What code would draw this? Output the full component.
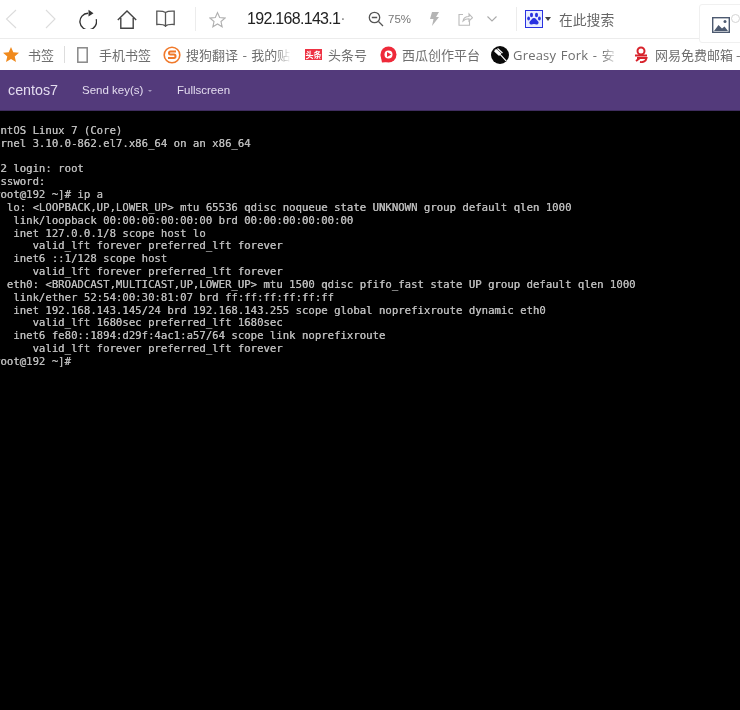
<script>
  const lines = [
    "CentOS Linux 7 (Core)",
    "Kernel 3.10.0-862.el7.x86_64 on an x86_64",
    "",
    "192 login: root",
    "Password:",
    "[root@192 ~]# ip a",
    "1: lo: <LOOPBACK,UP,LOWER_UP> mtu 65536 qdisc noqueue state UNKNOWN group default qlen 1000",
    "    link/loopback 00:00:00:00:00:00 brd 00:00:00:00:00:00",
    "    inet 127.0.0.1/8 scope host lo",
    "       valid_lft forever preferred_lft forever",
    "    inet6 ::1/128 scope host",
    "       valid_lft forever preferred_lft forever",
    "2: eth0: <BROADCAST,MULTICAST,UP,LOWER_UP> mtu 1500 qdisc pfifo_fast state UP group default qlen 1000",
    "    link/ether 52:54:00:30:81:07 brd ff:ff:ff:ff:ff:ff",
    "    inet 192.168.143.145/24 brd 192.168.143.255 scope global noprefixroute dynamic eth0",
    "       valid_lft 1680sec preferred_lft 1680sec",
    "    inet6 fe80::1894:d29f:4ac1:a57/64 scope link noprefixroute",
    "       valid_lft forever preferred_lft forever",
    "[root@192 ~]#"
  ];
</script>

<div class="page">
  <div class="toolbar">
    <svg class="ic back" width="12" height="20" viewBox="0 0 12 20"><path d="M11 1 1.500 10 11 19" fill="none" stroke="#dcdcdc" stroke-width="1.100"/></svg>
    <svg class="ic fwd" width="11" height="20" viewBox="0 0 11 20"><path d="M1 1 10 10 1 19" fill="none" stroke="#dcdcdc" stroke-width="1.100"/></svg>
    <svg class="ic reload" width="18" height="20" viewBox="0 0 18 20"><path d="M17.200 9.300A8.300 8.300 0 1 1 9 3.300" fill="none" stroke="#333" stroke-width="1.400" transform="translate(0 1)"/><path d="M9.500 .8 14.500 4.300 9.500 7.500Z" fill="#333"/></svg>
    <svg class="ic home" width="20" height="19" viewBox="0 0 20 19"><path d="M.8 10 10 1 19.200 10M3.800 8v10.200h12.400V8" fill="none" stroke="#444" stroke-width="1.400"/></svg>
    <svg class="ic book" width="19" height="18" viewBox="0 0 19 18"><path d="M9.500 2.500C8 1.500 4 1 .8 1.200v13.300c3.200-.2 7.200.2 8.700 1.500 1.500-1.300 5.500-1.700 8.700-1.500V1.200C15 1 11 1.500 9.500 2.500Zm0 0V17" fill="none" stroke="#555" stroke-width="1.300"/></svg>
    <span class="vsep first"></span>
    <svg class="ic star" width="17" height="17" viewBox="0 0 18 17"><path d="M9 1.200 11.300 6.400 16.900 7 12.700 10.700 13.900 16.200 9 13.300 4.100 16.200 5.300 10.700 1.100 7 6.700 6.400Z" fill="none" stroke="#b0b0b0" stroke-width="1.200"/></svg>
    <span class="url">192.168.143.1<span class="dim">·</span></span>
    <svg class="ic mag" width="16" height="16" viewBox="0 0 16 16"><circle cx="6.500" cy="6.500" r="5.200" fill="none" stroke="#555" stroke-width="1.300"/><path d="M3.800 6.500h5.400M10.500 10.500 15 15" fill="none" stroke="#555" stroke-width="1.300"/></svg>
    <span class="zoomv">75%</span>
    <svg class="ic bolt" width="9" height="14" viewBox="0 0 9 14"><path d="M2 0h7L6 5h3L2 14l1.500-7H0Z" fill="#b5b5b5"/></svg>
    <svg class="ic share" width="15" height="14" viewBox="0 0 15 14"><path d="M5 2.500H1v10.800h10.500V9M5 9c.5-3 3-4.500 6-4.500V2l3.500 3.700L11 9V6.800C8.500 6.800 6.500 7.500 5 9Z" fill="none" stroke="#bbb" stroke-width="1.100"/></svg>
    <svg class="ic chev" width="10" height="6" viewBox="0 0 10 6"><path d="M.5.500 5 5 9.500.5" fill="none" stroke="#aaa" stroke-width="1.100"/></svg>
    <span class="vsep second"></span>
    <svg class="ic paw" width="18" height="18" viewBox="0 0 18 18"><rect x=".5" y=".5" width="17" height="17" fill="#e8edff" stroke="#2932e1"/><ellipse cx="6.500" cy="5" rx="1.500" ry="2.200" fill="#2932e1"/><ellipse cx="11.500" cy="5" rx="1.500" ry="2.200" fill="#2932e1"/><ellipse cx="3.600" cy="8.500" rx="1.400" ry="1.900" fill="#2932e1"/><ellipse cx="14.400" cy="8.500" rx="1.400" ry="1.900" fill="#2932e1"/><path d="M9 8c2 0 2.500 2 4 3.200 1.300 1.200.5 3.500-1.500 3.300-1-.1-1.500-.4-2.500-.4s-1.500.3-2.500.4c-2 .2-2.800-2.100-1.500-3.300C6.500 10 7 8 9 8Z" fill="#2932e1"/></svg>
    <span class="caret"></span>
    <span class="search">在此搜索</span>
  </div>

  <div class="card">
    <svg width="18" height="16" viewBox="0 0 18 16"><rect x=".7" y=".7" width="16.600" height="14.600" fill="#fff" stroke="#4d5a70" stroke-width="1.400"/><path d="M2 14l4.500-6 3.500 3.500 2.500-2L16 14Z" fill="#4d5a70"/><circle cx="13" cy="4.500" r="1.500" fill="#4d5a70"/></svg>
    <span class="lens"></span>
  </div>

  <div class="bookmarks">
    <svg class="b bstar" width="16" height="15" viewBox="0 0 16 15"><path d="M8 0 10.300 5.200 16 5.800 11.700 9.500 13 15 8 12.100 3 15 4.300 9.500 0 5.800 5.700 5.200Z" fill="#f08a1d"/></svg>
    <span class="lbl s1">书签</span>
    <span class="hsep"></span>
    <svg class="b phone" width="11" height="16" viewBox="0 0 11 16"><rect x=".8" y=".8" width="9.400" height="14.400" fill="none" stroke="#888" stroke-width="1.500"/></svg>
    <span class="lbl s2">手机书签</span>
    <svg class="b sogou" width="18" height="18" viewBox="0 0 18 18"><circle cx="9" cy="9" r="7.800" fill="#fff" stroke="#f0792a" stroke-width="1.600"/><path d="M13 5.500H7.500c-2 0-2 3 0 3h3.500c2 0 2 3.500 0 3.500H5" fill="none" stroke="#f0792a" stroke-width="2"/></svg>
    <span class="lbl s3 fade">搜狗翻译 - 我的贴</span>
    <span class="b tt">头条</span>
    <span class="lbl s4">头条号</span>
    <svg class="b xg" width="18" height="18" viewBox="0 0 18 18"><circle cx="9.500" cy="8.500" r="8" fill="#ee2a3a"/><path d="M1.500 9 3 16.500 9 16Z" fill="#ee2a3a"/><circle cx="9.500" cy="8.500" r="4" fill="#fff"/><path d="M8 6 12.300 8.500 8 11Z" fill="#ee2a3a"/></svg>
    <span class="lbl s5">西瓜创作平台</span>
    <svg class="b gf" width="18" height="18" viewBox="0 0 18 18"><circle cx="9" cy="9" r="9" fill="#0a0a0a"/><path d="M5 3.500 10 8M3.500 5l5 4.500M6.500 2.500l5 4.500M3.800 3.800l6.500 5.800 5 5.500" stroke="#fff" stroke-width="1.200" fill="none"/></svg>
    <span class="lbl s6 latin fade">Greasy Fork - 安</span>
    <svg class="b wy" width="14" height="17" viewBox="0 0 14 17"><circle cx="7" cy="5" r="3.500" fill="none" stroke="#d8232c" stroke-width="2"/><path d="M1 9.500h12M3 12h9.500C12 15 9 16.500 6 16M2 15l4-3" fill="none" stroke="#d8232c" stroke-width="2"/></svg>
    <span class="lbl s7">网易免费邮箱 -</span>
  </div>

  <div class="nav">
    <span class="brand">centos7</span>
    <span class="item send">Send key(s)<span class="mini"></span></span>
    <span class="item full">Fullscreen</span>
  </div>

  <div class="term">
    <pre>{lines.join("\n")}</pre>
  </div>
</div>

<style>
  :global(body) {
    margin: 0;
    background: #000;
  }
  .page {
    position: relative;
    width: 740px;
    height: 710px;
    overflow: hidden;
    font-family: "Noto Sans CJK SC", "Noto Sans", sans-serif;
  }
  .toolbar {
    height: 38px;
    background: #fff;
    border-bottom: 1px solid #ececec;
    display: flex;
    align-items: center;
    filter: blur(0.3px);
  }
  .ic { flex: none; }
  .back { margin-left: 5px; }
  .fwd { margin-left: 28px; }
  .reload { margin-left: 23px; }
  .home { margin-left: 20px; }
  .book { margin-left: 19px; }
  .vsep { width: 1px; height: 24px; background: #ececec; flex: none; }
  .vsep.first { margin-left: 20px; }
  .star { margin-left: 13px; }
  .url {
    margin-left: 21px;
    width: 104px;
    font: 16px "Liberation Sans", sans-serif;
    color: #222;
    letter-spacing: -0.7px;
    white-space: nowrap;
  }
  .dim { color: #888; }
  .mag { margin-left: 17px; }
  .zoomv { margin-left: 4px; font: 11.500px "Liberation Sans", sans-serif; color: #777; width: 24px; }
  .bolt { margin-left: 18px; }
  .share { margin-left: 19px; }
  .chev { margin-left: 14px; }
  .vsep.second { margin-left: 19px; }
  .paw { margin-left: 8px; }
  .caret {
    margin-left: 2px;
    border: 3px solid transparent;
    border-top: 4px solid #444;
    border-bottom: 0;
  }
  .search { margin-left: 8px; font-size: 13.800px; color: #666; white-space: nowrap; }
  .card {
    position: absolute;
    left: 699px;
    top: 4px;
    width: 60px;
    height: 39px;
    background: #fff;
    border: 1px solid #f0f0f0;
    border-radius: 3px;
    box-sizing: border-box;
    padding: 12px 0 0 12px;
    z-index: 2;
  }
  .card svg { display: block; }
  .lens {
    position: absolute;
    left: 31px;
    top: 9px;
    width: 7px;
    height: 7px;
    border: 1px solid #d4d4d4;
    border-radius: 50%;
  }
  .bookmarks {
    height: 31px;
    background: #fff;
    display: flex;
    align-items: center;
    white-space: nowrap;
    overflow: hidden;
    filter: blur(0.3px);
  }
  .b { flex: none; }
  .lbl { font-size: 13px; color: #6e6e6e; flex: none; }
  .latin { font-family: "Open Sans", "Noto Sans CJK SC", sans-serif; letter-spacing: 0.2px; }
  .fade { -webkit-mask-image: linear-gradient(to right, #000 85%, transparent); mask-image: linear-gradient(to right, #000 85%, transparent); }
  .bstar { margin-left: 3px; }
  .s1 { margin-left: 9px; width: 27px; }
  .hsep { width: 1px; height: 17px; background: #ddd; margin-left: 9px; flex: none; }
  .phone { margin-left: 12px; }
  .s2 { margin-left: 11px; width: 53px; }
  .sogou { margin-left: 11px; }
  .s3 { margin-left: 5px; width: 105px; word-spacing: 1.500px; overflow: hidden; }
  .tt {
    margin-left: 14px;
    width: 17px;
    height: 11px;
    background: #ee3344;
    color: #fff;
    font-size: 8px;
    line-height: 11px;
    text-align: center;
    font-weight: 700;
  }
  .s4 { margin-left: 6px; width: 39px; }
  .xg { margin-left: 12px; }
  .s5 { margin-left: 5px; width: 78px; }
  .gf { margin-left: 11px; }
  .s6 { margin-left: 4px; width: 105px; overflow: hidden; word-spacing: 1px; }
  .wy { margin-left: 16px; }
  .s7 { margin-left: 7px; }
  .nav {
    height: 41px;
    background: #533a7b;
    border-bottom: 1px solid #3f2d5e;
    box-sizing: border-box;
    display: flex;
    align-items: center;
    font-family: "Liberation Sans", sans-serif;
    color: #e3dcef;
    filter: blur(0.25px);
  }
  .brand { margin-left: 8px; font-size: 14.300px; width: 74px; }
  .item { font-size: 11.500px; }
  .send { width: 95px; display: flex; align-items: center; }
  .mini {
    margin-left: 5px;
    margin-top: 2px;
    border: 2.500px solid transparent;
    border-top: 2.500px solid #a597c0;
    border-bottom: 0;
  }
  .term {
    height: 600px;
    background: #000;
    padding-top: 14px;
    box-sizing: border-box;
  }
  pre {
    margin: 0 0 0 -12.500px;
    font-family: "DejaVu Sans Mono", "Liberation Mono", monospace;
    font-size: 10.670px;
    line-height: 12.830px;
    color: #b8b8b8;
    text-shadow: 0.3px 0 0 #b8b8b8;
    filter: blur(0.3px);
  }
</style>
